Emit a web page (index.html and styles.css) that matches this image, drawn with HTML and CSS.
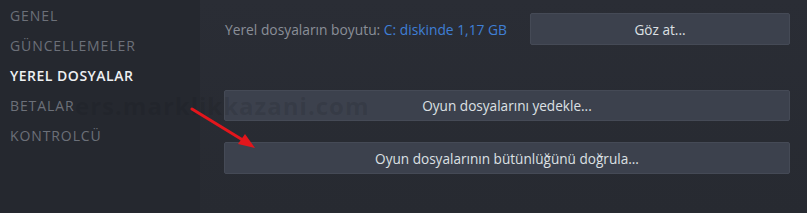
FILE: index.html
```html
<!DOCTYPE html>
<html lang="tr">
<head>
    <meta charset="UTF-8">
    <title>Yerel Dosyalar</title>
    <link rel="stylesheet" href="styles.css">
</head>
<body>
    <div class="page">
        <div class="sidebar">
            <div class="nav-item">Genel</div>
            <div class="nav-item">Güncellemeler</div>
            <div class="nav-item active">Yerel Dosyalar</div>
            <div class="nav-item">Betalar</div>
            <div class="nav-item">Kontrolcü</div>
        </div>
        <div class="content">
            <div class="size-row">
                <div class="size-label">Yerel dosyaların boyutu: <span class="size-link">C: diskinde 1,17 GB</span></div>
                <button class="btn btn-browse">Göz at...</button>
            </div>
            <button class="btn btn-wide backup">Oyun dosyalarını yedekle...</button>
            <button class="btn btn-wide verify">Oyun dosyalarının bütünlüğünü doğrula...</button>
        </div>
    </div>

    <div class="watermark">ers.marklikkazani.com</div>
    <svg class="arrow" width="80" height="50" viewBox="0 0 80 50">
        <line x1="2" y1="3" x2="56" y2="36" stroke="#e3161c" stroke-width="3" stroke-linecap="round"/>
        <polygon points="65,42 48,38 55,28" fill="#e3161c"/>
    </svg>
</body>
</html>
```

FILE: styles.css
```css
body {
    margin: 0;
    background-color: #2a2d35;
    font-family: 'Open Sans', 'Noto Sans', Arial, sans-serif;
}
.page {
    display: flex;
    width: 807px;
    height: 213px;
    overflow: hidden;
}
.sidebar {
    width: 200px;
    flex-shrink: 0;
    background-color: #25282f;
    padding-top: 1px;
}
.nav-item {
    padding-left: 10px;
    height: 30px;
    line-height: 30px;
    font-size: 14px;
    text-transform: uppercase;
    color: #6c7079;
    letter-spacing: 0.9px;
}
.nav-item.active {
    color: #eef0f2;
    font-weight: 600;
    letter-spacing: 0.5px;
}
.content {
    flex: 1;
    display: flex;
    flex-direction: column;
    padding: 13px 17px 0 24px;
    background: linear-gradient(180deg, #2a2d35 0%, #272a31 100%);
}
.size-row {
    display: flex;
    align-items: center;
    justify-content: space-between;
}
.size-label {
    font-size: 13.8px;
    color: #8a8f98;
    padding-left: 1px;
}
.size-link {
    color: #3f7fd6;
}
.btn {
    font-family: inherit;
    font-size: 13.6px;
    color: #dde0e4;
    background-color: #3c414d;
    border: 1px solid #454a56;
    border-radius: 2px;
    height: 32px;
    cursor: pointer;
}
.btn-browse {
    width: 260px;
}
.btn-wide {
    width: 100%;
}
.backup {
    margin-top: 45px;
    height: 31px;
}
.verify {
    margin-top: 21px;
}
.watermark {
    position: absolute;
    left: 75px;
    top: 89px;
    font-size: 24px;
    font-weight: 700;
    color: rgba(18, 20, 24, 0.14);
    letter-spacing: 1px;
}
.arrow {
    position: absolute;
    left: 190px;
    top: 106px;
}
```
